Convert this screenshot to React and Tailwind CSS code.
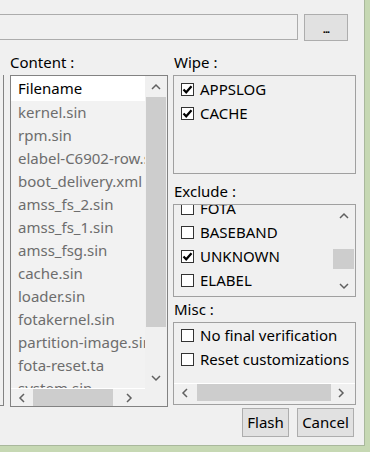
import React from 'react'

const Chevron = ({ dir }) => {
  const pts = {
    up: '1,6 5,2 9,6',
    down: '1,2 5,6 9,2',
    left: '6,1 2,5 6,9',
    right: '2,1 6,5 2,9',
  }[dir]
  const w = dir === 'up' || dir === 'down' ? 10 : 8
  const h = dir === 'up' || dir === 'down' ? 8 : 10
  return (
    <svg width={w} height={h} viewBox={`0 0 ${w} ${h}`}>
      <polyline points={pts} fill="none" stroke="#606060" strokeWidth="1.5" />
    </svg>
  )
}

const Check = ({ checked, label }) => (
  <div className="h-[24px] flex items-center pl-[7px] whitespace-nowrap">
    <span className="w-[13px] h-[13px] shrink-0 border border-[#333333] bg-white flex items-center justify-center">
      {checked && (
        <svg width="11" height="11" viewBox="0 0 11 11">
          <path d="M1.5 5.5 L4.2 8.3 L9.5 2.2" fill="none" stroke="#000" strokeWidth="2.2" />
        </svg>
      )}
    </span>
    <span className="ml-[6px] text-black">{label}</span>
  </div>
)

const files = [
  'kernel.sin',
  'rpm.sin',
  'elabel-C6902-row.sin',
  'boot_delivery.xml',
  'amss_fs_2.sin',
  'amss_fs_1.sin',
  'amss_fsg.sin',
  'cache.sin',
  'loader.sin',
  'fotakernel.sin',
  'partition-image.sin',
  'fota-reset.ta',
  'system.sin',
]

const App = () => {
  return (
    <div
      className="w-[370px] h-[452px] bg-[#c6d8b3] overflow-hidden text-[15px]"
      style={{ fontFamily: '"Noto Sans", "Open Sans", sans-serif' }}
    >
      <div className="w-[365px] h-[446px] bg-[#f0f0f0] border-r border-b border-[#a9b89c] flex flex-col">
        {/* Path row */}
        <div className="h-[40px] pt-[14px] flex items-start shrink-0">
          <div className="w-[298px] h-[26px] border-t border-b border-r border-[#acacac]" />
          <button className="ml-[6px] w-[44px] h-[27px] border border-[#adadad] bg-[#e1e1e1] flex items-center justify-center">
            <span className="text-[11px] font-bold leading-none pt-[1px] tracking-[-1px]">...</span>
          </button>
        </div>

        <div className="flex items-start">
          {/* Partial left list */}
          <div className="mt-[35px] w-[4px] h-[331px] border-r border-b border-[#828282] shrink-0" />

          {/* Content */}
          <div className="ml-[6px] w-[158px] shrink-0 flex flex-col">
            <div className="h-[35px] pt-[12px] leading-[20px] text-black">Content :</div>
            <div className="h-[332px] border border-[#828282] flex flex-col">
              <div className="h-[312px] flex">
                <div className="w-[134px] overflow-hidden bg-[#f2f2f2] whitespace-nowrap">
                  <div className="h-[25px] leading-[25px] bg-white pl-[7px] text-black">Filename</div>
                  {files.map((f) => (
                    <div key={f} className="h-[23px] leading-[23px] pl-[7px] text-[#6d6d6d]">
                      {f}
                    </div>
                  ))}
                </div>
                <div className="w-[22px] flex flex-col">
                  <div className="h-[21px] flex items-center justify-center">
                    <Chevron dir="up" />
                  </div>
                  <div className="h-[230px] mx-[1px] bg-[#cdcdcd]" />
                  <div className="flex-1" />
                  <div className="h-[21px] flex items-center justify-center">
                    <Chevron dir="down" />
                  </div>
                </div>
              </div>
              <div className="flex-1 flex">
                <div className="w-[134px] border-t border-white flex items-stretch">
                  <div className="w-[22px] flex items-center justify-center">
                    <Chevron dir="left" />
                  </div>
                  <div className="w-[80px] bg-[#cdcdcd]" />
                  <div className="flex-1 flex items-center justify-center">
                    <Chevron dir="right" />
                  </div>
                </div>
              </div>
            </div>
          </div>

          {/* Options */}
          <div className="ml-[5px] w-[183px] shrink-0 flex flex-col">
            <div className="h-[35px] pt-[12px] pl-[1px] leading-[20px] text-black">Wipe :</div>
            <div className="h-[99px] border border-[#a0a0a0] pt-[1px]">
              <Check checked label="APPSLOG" />
              <Check checked label="CACHE" />
            </div>

            <div className="h-[30px] pt-[7px] pl-[1px] leading-[20px] text-black">Exclude :</div>
            <div className="h-[93px] border border-[#a0a0a0] flex">
              <div className="flex-1 overflow-hidden">
                <div className="-mt-[9px]">
                  <Check label="FOTA" />
                  <Check label="BASEBAND" />
                  <Check checked label="UNKNOWN" />
                  <Check label="ELABEL" />
                </div>
              </div>
              <div className="w-[21px] mr-[1px] flex flex-col">
                <div className="h-[21px] flex items-center justify-center">
                  <Chevron dir="up" />
                </div>
                <div className="h-[23px]" />
                <div className="h-[20px] bg-[#cdcdcd]" />
                <div className="flex-1" />
                <div className="h-[21px] flex items-center justify-center">
                  <Chevron dir="down" />
                </div>
              </div>
            </div>

            <div className="h-[25px] pt-[2px] pl-[1px] leading-[20px] text-black">Misc :</div>
            <div className="h-[83px] border border-[#a0a0a0] flex flex-col">
              <Check label="No final verification" />
              <Check label="Reset customizations" />
              <div className="flex-1" />
              <div className="h-[18px] border-t border-white flex items-stretch">
                <div className="w-[22px] flex items-center justify-center">
                  <Chevron dir="left" />
                </div>
                <div className="ml-[1px] w-[134px] bg-[#cdcdcd]" />
                <div className="w-[20px] flex items-center justify-center">
                  <Chevron dir="right" />
                </div>
              </div>
              <div className="h-[3px]" />
            </div>

            <div className="mt-[3px] flex justify-end gap-[8px] pr-[2px]">
              <button className="w-[47px] h-[29px] border border-[#adadad] bg-[#e1e1e1] text-black leading-none">
                Flash
              </button>
              <button className="w-[57px] h-[29px] border border-[#adadad] bg-[#e1e1e1] text-black leading-none">
                Cancel
              </button>
            </div>
          </div>
        </div>
      </div>
    </div>
  )
}

export default App
